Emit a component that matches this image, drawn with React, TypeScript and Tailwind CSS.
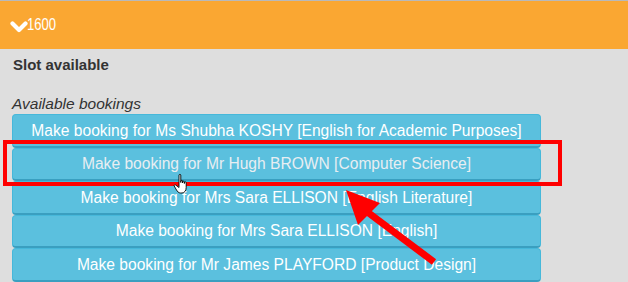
import React from "react";

const bookings = [
  "Make booking for Ms Shubha KOSHY [English for Academic Purposes]",
  "Make booking for Mr Hugh BROWN [Computer Science]",
  "Make booking for Mrs Sara ELLISON [English Literature]",
  "Make booking for Mrs Sara ELLISON [English]",
  "Make booking for Mr James PLAYFORD [Product Design]",
];

export default function App() {
  return (
    <div
      className="relative w-[628px] h-[282px] overflow-hidden bg-[#dedede]"
      style={{ fontFamily: '"Liberation Sans", Arial, sans-serif' }}
    >
      <div className="h-[49px] border-t border-[#b9b9b9] bg-[#faa732] flex items-center pl-[10px] text-white">
        <svg width="18" height="14" viewBox="0 0 18 14" className="mt-[3px]">
          <path d="M2.5 3.5 L9 10 L15.5 3.5" fill="none" stroke="white" strokeWidth="4.2" strokeLinecap="round" strokeLinejoin="round" />
        </svg>
        <span className="text-[17px] leading-[18px] inline-block scale-x-[0.77] origin-left -ml-[1px]">1600</span>
      </div>
      <div className="pl-[12px]">
        <div className="pt-[7px] pl-[1px] text-[15px] font-bold text-[#333] leading-[17px]">Slot available</div>
        <div className="mt-[22px] text-[15.5px] italic text-[#333] leading-[18px]">Available bookings</div>
        <div className="mt-[1px] w-[529px] flex flex-col">
          {bookings.map((b, i) => (
            <div
              key={i}
              className={`h-[33.5px] shrink-0 flex items-center justify-center rounded-[4px] border border-[#46b8da] border-b-[2px] border-b-[#3a9fc0] bg-[#5bc0de] text-[15.6px] ${
                i === 1 ? "text-[#e8eef2]" : "text-white"
              }`}
            >
              {b}
            </div>
          ))}
        </div>
      </div>

      {/* red highlight rectangle */}
      <div className="absolute left-[3px] top-[140px] w-[559px] h-[46px] border-[4px] border-[#ff0000]" />

      {/* red arrow */}
      <svg className="absolute left-0 top-0" width="628" height="282" viewBox="0 0 628 282">
        <line x1="434" y1="262" x2="366" y2="211" stroke="#ff0000" strokeWidth="7" />
        <polygon points="346,190 380,203 358,225" fill="#ff0000" />
      </svg>

      {/* hand cursor */}
      <svg className="absolute left-[173px] top-[171px]" width="20" height="27" viewBox="0 0 20 22">
        <path
          d="M6 1.5 C6 0.7 7.8 0.7 7.8 1.5 L7.8 9 L7.8 7.5 C7.8 6.7 9.6 6.7 9.6 7.5 L9.6 9.5 L9.6 8.3 C9.6 7.5 11.4 7.5 11.4 8.3 L11.4 10 L11.4 9 C11.4 8.2 13.2 8.2 13.2 9 L13.2 14 C13.2 17 11.5 19.5 9 19.5 L7.5 19.5 C5.5 19.5 4.5 18 3.5 16.5 L1.2 12.5 C0.8 11.7 2 10.8 2.8 11.6 L6 14 Z"
          fill="white"
          stroke="black"
          strokeWidth="0.9"
          strokeLinejoin="round"
        />
      </svg>
    </div>
  );
}
